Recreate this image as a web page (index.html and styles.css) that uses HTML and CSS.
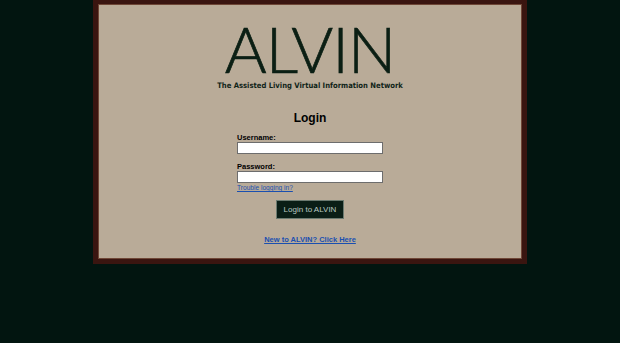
FILE: index.html
```html
<!DOCTYPE html>
<html lang="en">

<head>
    <meta charset="utf-8">
    <meta name="viewport" content="width=device-width, initial-scale=1.0">
    <title>ALVIN - Login</title>

    <link rel="stylesheet" href="styles.css">

</head>

<body>
    <div class="ramme">
        <div class="panel">

            <div class="logo">
                <div class="logo_navn">ALVIN</div>
                <div class="logo_tekst">The Assisted Living Virtual Information Network</div>
            </div>

            <h1>Login</h1>

            <form class="login_form">
                <label for="brugernavn">Username:</label>
                <input type="text" id="brugernavn">

                <label for="kode" class="kode_label">Password:</label>
                <input type="password" id="kode">

                <a href="#" class="trouble">Trouble logging in?</a>

                <button type="button" class="login_knap">Login to ALVIN</button>
            </form>

            <a href="#" class="ny_bruger">New to ALVIN? Click Here</a>

        </div>
    </div>
</body>

</html>
```

FILE: styles.css
```css
body {
    margin: 0;
    background-color: #021510;
    font-family: "Liberation Sans", Arial, sans-serif;
}

.ramme {
    width: 424px;
    margin: 0 auto;
    border: 5px solid #3a1510;
    border-top-width: 4px;
    background-color: #3a1510;
}

.panel {
    height: 253px;
    background-color: #b9ab98;
    border: 1px solid #6e4636;
    text-align: center;
}

.logo {
    padding-top: 11px;
}

.logo_navn {
    font-family: "Lato", sans-serif;
    font-weight: 300;
    font-size: 64px;
    line-height: 65px;
    letter-spacing: -1px;
    color: #0b1f14;
    -webkit-text-stroke: 0.7px #0b1f14;
}

.logo_tekst {
    font-family: "DejaVu Sans Condensed", "DejaVu Sans", sans-serif;
    font-stretch: condensed;
    font-weight: bold;
    font-size: 7.6px;
    line-height: 10px;
    color: #102418;
}

h1 {
    font-size: 12px;
    line-height: 14px;
    margin: 20px 0 8px 0;
    color: #000;
}

.login_form {
    width: 146px;
    margin: 0 auto;
    text-align: left;
}

label {
    display: block;
    font-size: 7.5px;
    font-weight: bold;
    line-height: 9px;
}

.kode_label {
    margin-top: 8px;
}

input {
    display: block;
    box-sizing: border-box;
    width: 146px;
    height: 12px;
    margin: 0;
    padding: 0;
    border: 1px solid #6d6d6d;
    background-color: #fff;
}

.trouble {
    display: block;
    font-size: 6.6px;
    color: #1a4fb0;
    margin-top: 1px;
    line-height: 8px;
}

.login_knap {
    display: block;
    margin: 8px auto 0 auto;
    width: 68px;
    height: 19px;
    padding: 0;
    background-color: #0a1e16;
    border: 1px solid #6b7a70;
    color: #b9c9c0;
    font-family: "Liberation Sans", Arial, sans-serif;
    font-size: 8px;
}

.ny_bruger {
    display: table;
    margin: 16px auto 0 auto;
    font-size: 7.5px;
    line-height: 9px;
    font-weight: bold;
    color: #1a4fb0;
}
```
